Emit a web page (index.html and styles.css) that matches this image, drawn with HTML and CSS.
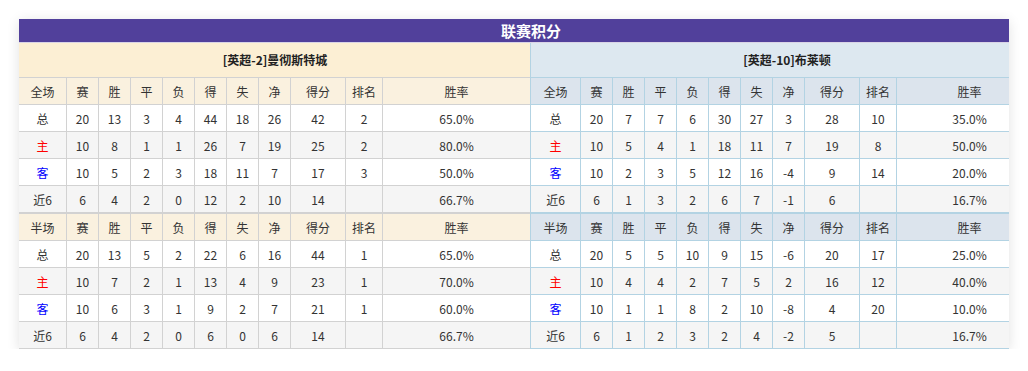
FILE: index.html
```html
<!DOCTYPE html>
<html lang="zh-CN">
<head>
  <meta charset="UTF-8">
  <title>联赛积分</title>
  <link rel="stylesheet" href="styles.css">
</head>
<body>

<div class="board">
  <div class="board-inner">
    <div class="title">联赛积分</div>

    <div class="sides">
      <!-- 主队 -->
      <div class="side home">
        <div class="team">[英超-2]曼彻斯特城</div>
        <table class="stats">
          <colgroup>
            <col class="c-first"><col class="c-num"><col class="c-num"><col class="c-num"><col class="c-num">
            <col class="c-num"><col class="c-num"><col class="c-num"><col class="c-pts"><col class="c-rank"><col class="c-rate">
          </colgroup>
          <tr class="head"><td>全场</td><td>赛</td><td>胜</td><td>平</td><td>负</td><td>得</td><td>失</td><td>净</td><td>得分</td><td>排名</td><td>胜率</td></tr>
          <tr><td>总</td><td>20</td><td>13</td><td>3</td><td>4</td><td>44</td><td>18</td><td>26</td><td>42</td><td>2</td><td>65.0%</td></tr>
          <tr class="alt"><td class="red">主</td><td>10</td><td>8</td><td>1</td><td>1</td><td>26</td><td>7</td><td>19</td><td>25</td><td>2</td><td>80.0%</td></tr>
          <tr><td class="blue">客</td><td>10</td><td>5</td><td>2</td><td>3</td><td>18</td><td>11</td><td>7</td><td>17</td><td>3</td><td>50.0%</td></tr>
          <tr class="alt"><td>近6</td><td>6</td><td>4</td><td>2</td><td>0</td><td>12</td><td>2</td><td>10</td><td>14</td><td></td><td>66.7%</td></tr>
        </table>
        <table class="stats half">
          <colgroup>
            <col class="c-first"><col class="c-num"><col class="c-num"><col class="c-num"><col class="c-num">
            <col class="c-num"><col class="c-num"><col class="c-num"><col class="c-pts"><col class="c-rank"><col class="c-rate">
          </colgroup>
          <tr class="head"><td>半场</td><td>赛</td><td>胜</td><td>平</td><td>负</td><td>得</td><td>失</td><td>净</td><td>得分</td><td>排名</td><td>胜率</td></tr>
          <tr><td>总</td><td>20</td><td>13</td><td>5</td><td>2</td><td>22</td><td>6</td><td>16</td><td>44</td><td>1</td><td>65.0%</td></tr>
          <tr class="alt"><td class="red">主</td><td>10</td><td>7</td><td>2</td><td>1</td><td>13</td><td>4</td><td>9</td><td>23</td><td>1</td><td>70.0%</td></tr>
          <tr><td class="blue">客</td><td>10</td><td>6</td><td>3</td><td>1</td><td>9</td><td>2</td><td>7</td><td>21</td><td>1</td><td>60.0%</td></tr>
          <tr class="alt"><td>近6</td><td>6</td><td>4</td><td>2</td><td>0</td><td>6</td><td>0</td><td>6</td><td>14</td><td></td><td>66.7%</td></tr>
        </table>
      </div>

      <!-- 客队 -->
      <div class="side away">
        <div class="team">[英超-10]布莱顿</div>
        <table class="stats">
          <colgroup>
            <col class="c-first2"><col class="c-num"><col class="c-num"><col class="c-num"><col class="c-num">
            <col class="c-num"><col class="c-num"><col class="c-num"><col class="c-pts"><col class="c-rank"><col class="c-rate2">
          </colgroup>
          <tr class="head"><td>全场</td><td>赛</td><td>胜</td><td>平</td><td>负</td><td>得</td><td>失</td><td>净</td><td>得分</td><td>排名</td><td>胜率</td></tr>
          <tr><td>总</td><td>20</td><td>7</td><td>7</td><td>6</td><td>30</td><td>27</td><td>3</td><td>28</td><td>10</td><td>35.0%</td></tr>
          <tr class="alt"><td class="red">主</td><td>10</td><td>5</td><td>4</td><td>1</td><td>18</td><td>11</td><td>7</td><td>19</td><td>8</td><td>50.0%</td></tr>
          <tr><td class="blue">客</td><td>10</td><td>2</td><td>3</td><td>5</td><td>12</td><td>16</td><td>-4</td><td>9</td><td>14</td><td>20.0%</td></tr>
          <tr class="alt"><td>近6</td><td>6</td><td>1</td><td>3</td><td>2</td><td>6</td><td>7</td><td>-1</td><td>6</td><td></td><td>16.7%</td></tr>
        </table>
        <table class="stats half">
          <colgroup>
            <col class="c-first2"><col class="c-num"><col class="c-num"><col class="c-num"><col class="c-num">
            <col class="c-num"><col class="c-num"><col class="c-num"><col class="c-pts"><col class="c-rank"><col class="c-rate2">
          </colgroup>
          <tr class="head"><td>半场</td><td>赛</td><td>胜</td><td>平</td><td>负</td><td>得</td><td>失</td><td>净</td><td>得分</td><td>排名</td><td>胜率</td></tr>
          <tr><td>总</td><td>20</td><td>5</td><td>5</td><td>10</td><td>9</td><td>15</td><td>-6</td><td>20</td><td>17</td><td>25.0%</td></tr>
          <tr class="alt"><td class="red">主</td><td>10</td><td>4</td><td>4</td><td>2</td><td>7</td><td>5</td><td>2</td><td>16</td><td>12</td><td>40.0%</td></tr>
          <tr><td class="blue">客</td><td>10</td><td>1</td><td>1</td><td>8</td><td>2</td><td>10</td><td>-8</td><td>4</td><td>20</td><td>10.0%</td></tr>
          <tr class="alt"><td>近6</td><td>6</td><td>1</td><td>2</td><td>3</td><td>2</td><td>4</td><td>-2</td><td>5</td><td></td><td>16.7%</td></tr>
        </table>
      </div>
    </div>
  </div>
</div>

</body>
</html>
```

FILE: styles.css
```css
body {
  margin: 0;
  background: #fff;
  font-family: "Noto Sans CJK SC", "Noto Sans", sans-serif;
  font-size: 12px;
  color: #333;
}

.board {
  width: 990px;
  margin: 19px 0 0 19px;
  overflow: hidden;
  background: #fff;
  box-shadow: 0 2px 12px rgba(0, 0, 0, 0.12);
}

.board-inner {
  width: 1024px;
}

.title {
  height: 23px;
  line-height: 23px;
  border-bottom: 1px solid #d9d4e6;
  background: #51409b;
  color: #fff;
  font-size: 15px;
  font-weight: bold;
  text-align: center;
}

.sides {
  display: flex;
}

.side {
  width: 512px;
  box-sizing: border-box;
}

.team {
  height: 34px;
  line-height: 34px;
  border-bottom: 1px solid #d2d2d2;
  font-weight: bold;
  text-align: center;
  color: #222;
}

.stats {
  width: 512px;
  table-layout: fixed;
  border-collapse: separate;
  border-spacing: 0;
}

.stats td {
  box-sizing: border-box;
  height: 27px;
  padding: 0;
  text-align: center;
  border-right: 1px solid #d2d2d2;
  border-bottom: 1px solid #d2d2d2;
  white-space: nowrap;
}

.stats tr {
  height: 27px;
}

.stats.half {
  border-top: 1px solid #d2d2d2;
}

.c-first { width: 48px; }
.c-first2 { width: 50px; }
.c-num { width: 32px; }
.c-pts { width: 55px; }
.c-rank { width: 37px; }
.c-rate { width: 148px; }
.c-rate2 { width: 146px; }

.alt td {
  background: #f5f5f5;
}

.red { color: #f00; }
.blue { color: #00f; }

/* 主队配色 */
.home .team { background: #fcefd4; }
.home .head td { background: #faf1df; }

/* 客队配色 */
.away {
  margin-left: -1px;
  border-left: 1px solid #b3d3e3;
  width: 513px;
}

.away .team {
  background: #dde8f0;
  border-bottom-color: #b3d3e3;
}

.away .head td { background: #dce4ed; }

.away .stats td {
  border-right-color: #b3d3e3;
  border-bottom-color: #b3d3e3;
}

.away .stats.half {
  border-top-color: #b3d3e3;
}
```
